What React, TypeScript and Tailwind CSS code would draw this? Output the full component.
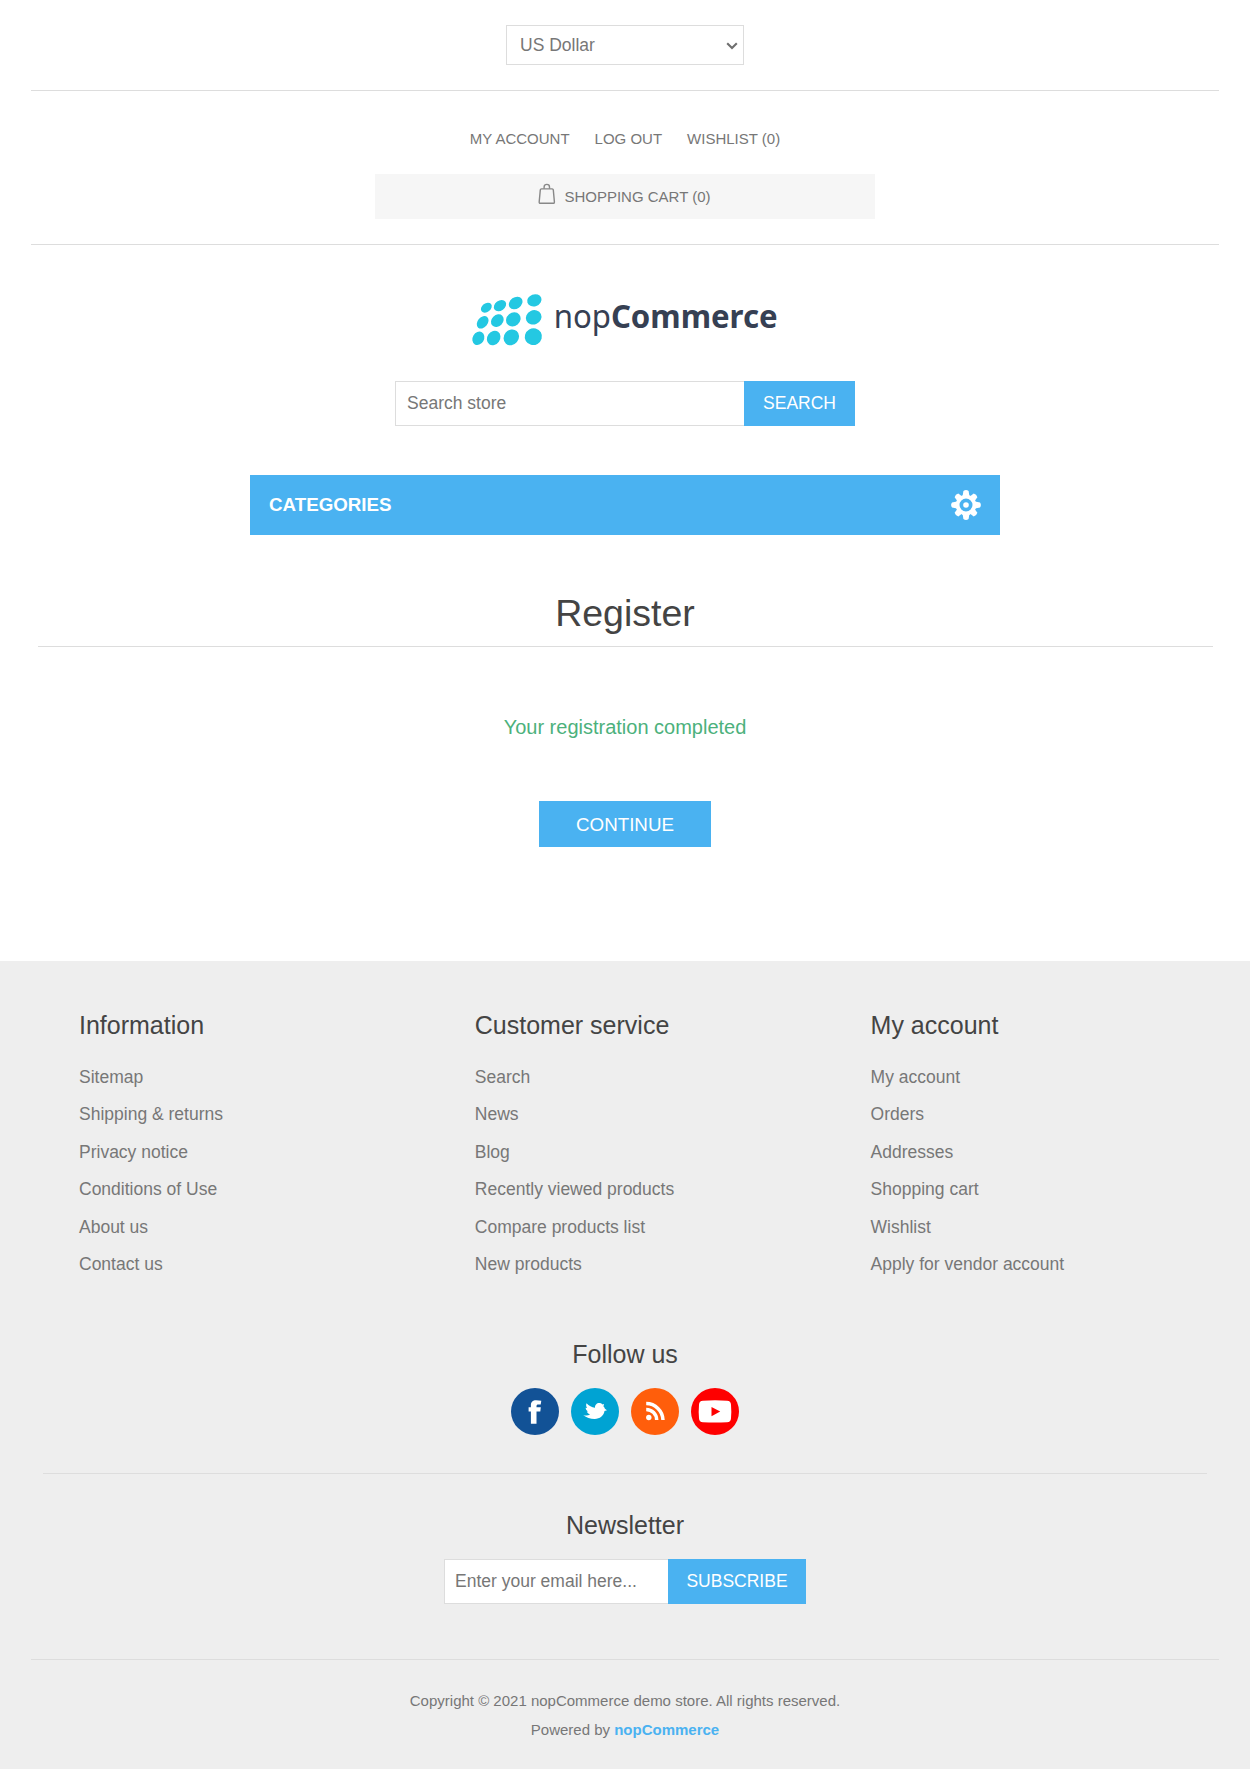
import React from 'react';

const columns = [
  {
    title: 'Information',
    links: ['Sitemap', 'Shipping & returns', 'Privacy notice', 'Conditions of Use', 'About us', 'Contact us'],
  },
  {
    title: 'Customer service',
    links: ['Search', 'News', 'Blog', 'Recently viewed products', 'Compare products list', 'New products'],
  },
  {
    title: 'My account',
    links: ['My account', 'Orders', 'Addresses', 'Shopping cart', 'Wishlist', 'Apply for vendor account'],
  },
];

// cx, cy, rx, ry, rotation
const dots = [
  [109, 83, 18, 13, -38],
  [150, 77, 20, 15, -35],
  [197, 69, 22, 17, -35],
  [253, 61, 22, 18, -20],
  [98, 127, 21, 15, -50],
  [142, 122, 21, 17, -45],
  [190, 118, 23, 20, -40],
  [251, 112, 24, 21, -25],
  [85, 175, 21, 17, -60],
  [131, 174, 23, 19, -55],
  [184, 172, 25, 22, -50],
  [250, 170, 26, 25, -30],
];

function Logo() {
  return (
    <svg className="h-[60px] w-[306px] overflow-visible" viewBox="66 30 918 180" aria-label="nopCommerce">
      {dots.map(([cx, cy, rx, ry, r], i) => (
        <ellipse key={i} cx={cx} cy={cy} rx={rx} ry={ry} fill="#24c8e2" transform={`rotate(${r} ${cx} ${cy})`} />
      ))}
      <text
        fill="#364053"
        fontFamily="'Noto Sans', 'Open Sans', sans-serif"
        fontSize="97"
        transform="translate(311 144) scale(0.963 1)"
      >
        nop<tspan fontWeight="700">Commerce</tspan>
      </text>
    </svg>
  );
}

function BagIcon() {
  return (
    <svg className="h-[22px] w-[18px]" viewBox="0 0 18 22" fill="none" stroke="#888" strokeWidth="1.4">
      <path d="M3.400 5.900h10.800c.7 0 1 .3 1.100 1l1.100 12c.1.900-.3 1.400-1.200 1.400H2.400c-.9 0-1.300-.5-1.200-1.400l1.100-12c.1-.7.400-1 1.100-1Z" />
      <path d="M6.100 5.800V4c0-1.600 1.100-2.600 2.700-2.600s2.700 1 2.700 2.600v1.800" />
    </svg>
  );
}

function GearIcon() {
  return (
    <svg className="size-[30px]" viewBox="-15 -15 30 30">
      <g fill="#fff">
        {[0, 45, 90, 135, 180, 225, 270, 315].map((a) => (
          <path
            key={a}
            transform={`rotate(${a})`}
            d={a % 90 === 0 ? 'M-3.400-9-2.600-14Q0-15.800 2.600-14L3.400-9Z' : 'M-3.200-9-2.600-13.500Q0-15 2.600-13.500L3.200-9Z'}
          />
        ))}
      </g>
      <circle r="8.400" fill="none" stroke="#fff" strokeWidth="3.800" />
      <circle r="2.800" fill="#fff" />
    </svg>
  );
}

function Social() {
  return (
    <div className="mt-[18px] flex h-12 justify-center gap-3">
      <svg className="size-12" viewBox="0 0 48 48">
        <ellipse cx="24" cy="23.500" rx="24" ry="23.500" fill="#125296" />
        <path
          fill="#fff"
          d="M19.900 35.800V23.400h-2.300v-4.200h2.300v-2c0-3.500 1.900-5 5.200-5 2 0 3.600.2 5.200.5l-.6 3.700h-2.400c-1.300 0-1.800.5-1.800 1.600v1.200h4.300l-.5 4.200h-3.800v12.400Z"
        />
      </svg>
      <svg className="size-12" viewBox="0 0 48 48">
        <ellipse cx="24" cy="23.500" rx="24" ry="23.500" fill="#00a3d3" />
        <path
          fill="#fff"
          d="M15.500 15.200c2.500 2.600 5.200 3.900 8.500 4.500-.2-2.700 1.700-4.800 4.200-4.800 1.500 0 2.500.5 3.300 1.500l1.500-.3c-.1 1-.3 1.600-.6 2.100.9.900 1.300 1.600 1.500 2.500l2.100 1.500-2.500.9c-.7 4.700-4.700 7.900-9.800 7.900-4.500 0-8.200-1.400-11.400-3.700 2.900.5 5 .3 6.800-.8-1.600-.5-2.700-1.400-3.300-2.900l1.300-.1c-1.400-.9-2.300-2.100-2.500-3.800l1.600.4c-1.100-1.400-1.300-3.100-.7-4.900Z"
        />
      </svg>
      <svg className="size-12" viewBox="0 0 48 48">
        <ellipse cx="24" cy="23.500" rx="24" ry="23.500" fill="#ff5e0b" />
        <circle cx="17.800" cy="29.500" r="2.700" fill="#fff" />
        <path d="M15.200 21.500A10.500 10.500 0 0 1 25.700 32M15.200 15.600A16.800 16.800 0 0 1 32 32" fill="none" stroke="#fff" strokeWidth="3.500" />
      </svg>
      <svg className="size-12" viewBox="0 0 48 48">
        <ellipse cx="24" cy="23.500" rx="24" ry="23.500" fill="#fe0000" />
        <path fill="#fff" d="M12 12.700q12-1 24 0 3.800.2 4 4 .6 6.900 0 13.500-.2 3.800-4 4-12 .8-24 0-3.800-.2-4-4-.6-6.600 0-13.500.2-3.800 4-4Z" />
        <path fill="#fe0000" d="m20.500 18.900 8.700 4.700-8.700 4.700Z" />
      </svg>
    </div>
  );
}

export default function App() {
  return (
    <div className="flex h-[1769px] w-[1250px] flex-col bg-white font-['Liberation_Sans',Arial,sans-serif] text-[17.5px] text-[#777]">
      <header className="flex flex-col items-center">
        <div className="flex h-[91px] w-[1188px] justify-center border-b border-[#ddd] pt-[25px]">
          <div className="relative h-10 w-[238px]">
            <select className="h-10 w-full appearance-none border border-[#ddd] bg-white pt-px pl-[13px]">
              <option>US Dollar</option>
            </select>
            <svg className="absolute top-[17px] right-[6px] h-[8px] w-[12px]" viewBox="0 0 12 8" fill="none" stroke="#6f6f6f" strokeWidth="2.100">
              <path d="m1.200 1.200 4.800 4.800 4.800-4.800" />
            </svg>
          </div>
        </div>
        <div className="flex h-[154px] w-[1188px] flex-col items-center border-b border-[#ddd] pt-[34px] text-[15px]">
          <nav className="flex h-[28px] items-center gap-[25px]">
            <a>MY ACCOUNT</a>
            <a>LOG OUT</a>
            <a>WISHLIST (0)</a>
          </nav>
          <div className="mt-[21px] flex h-[45px] w-[500px] items-center justify-center gap-2 bg-[#f6f6f6] pr-px">
            <div className="-mt-[5px]">
              <BagIcon />
            </div>
            <span className="pt-px">SHOPPING CART (0)</span>
          </div>
        </div>
        <div className="mt-[45px]">
          <Logo />
        </div>
        <form className="mt-[31px] flex h-[45px] w-[460px]">
          <input
            className="min-w-0 flex-1 border border-r-0 border-[#ddd] bg-white pb-px pl-[11px] placeholder:text-[#777]"
            placeholder="Search store"
          />
          <button type="button" className="w-[111px] bg-[#4ab2f1] pb-px text-white">SEARCH</button>
        </form>
      </header>

      <div className="mt-[49px] flex h-[60px] w-[750px] items-center justify-between self-center bg-[#4ab2f1] pr-[19px] pl-[19px]">
        <span className="text-[18.75px] font-bold text-white">CATEGORIES</span>
        <GearIcon />
      </div>

      <main className="flex flex-col items-center">
        <h1 className="mt-[53px] h-[59px] w-[1175px] border-b border-[#ddd] text-center text-[37.5px] leading-[50px] text-[#444]">
          Register
        </h1>
        <p className="mt-[65px] text-[20px] leading-[30px] text-[#4cb17c]">Your registration completed</p>
        <button type="button" className="mt-[59px] h-[46px] w-[172px] bg-[#4ab2f1] pt-[2px] text-[18.75px] text-white">
          CONTINUE
        </button>
      </main>

      <footer className="mt-[114px] flex flex-1 flex-col items-center bg-[#eee]">
        <div className="flex w-[1188px] pt-[48px]">
          {columns.map((c) => (
            <section key={c.title} className="w-[395.8px] pl-12">
              <h2 className="text-[25px] leading-[32px] text-[#444]">{c.title}</h2>
              <ul className="mt-[17.5px] leading-[37.5px]">
                {c.links.map((l) => (
                  <li key={l}>{l}</li>
                ))}
              </ul>
            </section>
          ))}
        </div>
        <section className="mt-[54.5px] h-[136px] w-[1164px] border-b border-[#ddd]">
          <h2 className="text-center text-[25px] leading-[32px] text-[#444]">Follow us</h2>
          <Social />
        </section>
        <section className="flex h-[186px] w-[1188px] flex-col items-center border-b border-[#ddd] pt-[35px]">
          <h2 className="text-[25px] leading-[32px] text-[#444]">Newsletter</h2>
          <form className="mt-[18px] flex h-[45px] w-[362px]">
            <input
              className="min-w-0 flex-1 border border-r-0 border-[#ddd] bg-white pb-px pl-[10px] placeholder:text-[#777]"
              placeholder="Enter your email here..."
            />
            <button type="button" className="w-[138px] bg-[#4ab2f1] pb-px text-white">SUBSCRIBE</button>
          </form>
        </section>
        <div className="pt-[26px] text-center text-[15px] leading-[29px]">
          <p>Copyright © 2021 nopCommerce demo store. All rights reserved.</p>
          <p>
            Powered by <a className="font-bold text-[#4ab2f1]">nopCommerce</a>
          </p>
        </div>
      </footer>
    </div>
  );
}
